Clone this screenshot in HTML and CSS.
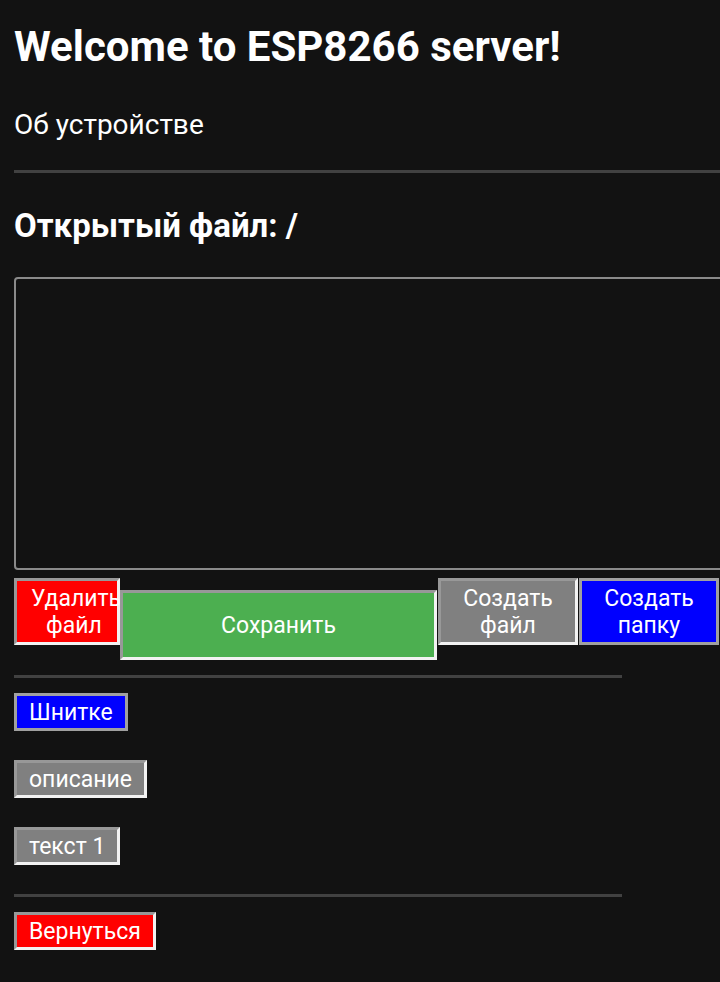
FILE: index.html
```html
<!DOCTYPE html>
<html lang="ru">
<head>
<meta charset="utf-8">
<title>ESP8266</title>
<link rel="stylesheet" href="styles.css">
</head>
<body>
<div class="page">
  <h1 class="title">Welcome to ESP8266 server!</h1>
  <p class="about">Об устройстве</p>
  <hr class="sep sep-wide">
  <h2 class="file-title">Открытый файл: /</h2>
  <textarea class="editor"></textarea>
  <div class="actions">
    <button class="btn btn-red btn-del">Удалить<br>файл</button>
    <button class="btn btn-green btn-save">Сохранить</button>
    <button class="btn btn-gray btn-new">Создать<br>файл</button>
    <button class="btn btn-blue btn-new">Создать<br>папку</button>
  </div>
  <hr class="sep sep-short sep-after-actions">
  <ul class="files">
    <li><button class="btn btn-blue btn-item">Шнитке</button></li>
    <li><button class="btn btn-gray btn-item">описание</button></li>
    <li><button class="btn btn-gray btn-item">текст 1</button></li>
  </ul>
  <hr class="sep sep-short">
  <div class="back">
    <button class="btn btn-red btn-item">Вернуться</button>
  </div>
</div>
</body>
</html>
```

FILE: styles.css
```css
html, body {
  margin: 0;
  padding: 0;
  background: #121212;
  color: #ffffff;
  font-family: Roboto, "Noto Sans", sans-serif;
  overflow: hidden;
}

.page {
  padding: 0 0 0 14px;
}

.title {
  margin: 0;
  padding-top: 22px;
  font-size: 42px;
  line-height: 50px;
  font-weight: 700;
}

.about {
  margin: 0;
  padding-top: 36px;
  font-size: 28px;
  line-height: 34px;
}

.sep {
  border: 0;
  height: 3px;
  background: #414141;
  margin: 0;
}

.sep-wide {
  margin-top: 28px;
}

.file-title {
  margin: 0;
  padding-top: 33px;
  font-size: 33px;
  line-height: 40px;
  font-weight: 700;
}

.editor {
  display: block;
  box-sizing: border-box;
  margin-top: 31px;
  width: 720px;
  height: 293px;
  background: #121212;
  border: 2px solid #8a8a8a;
  border-radius: 4px;
  resize: none;
}

.actions {
  display: flex;
  align-items: flex-start;
  margin-top: 8px;
}

.btn {
  box-sizing: border-box;
  font-family: Roboto, "Noto Sans", sans-serif;
  font-size: 23px;
  line-height: 27px;
  color: #ffffff;
  border-width: 3px;
  border-style: solid;
  border-color: #989898 #f2f2f2 #f2f2f2 #989898;
  padding: 3px 12px;
  margin: 0;
  white-space: nowrap;
}

.btn-red { background: #ff0000; }
.btn-green { background: #4caf50; }
.btn-gray { background: #808080; }
.btn-blue {
  background: #0000ff;
  border-color: #a0a0a0;
}

.btn-del {
  width: 106px;
  height: 67px;
  padding: 3px 0 3px 14px;
  text-align: center;
  overflow: visible;
}

.btn-save {
  width: 317px;
  height: 70px;
  margin-top: 12px;
  position: relative;
}

.btn-new {
  width: 140px;
  height: 67px;
  margin-left: 1px;
}

.sep-short {
  width: 608px;
}

.sep-after-actions {
  margin-top: 15px;
}

.files {
  list-style: none;
  margin: 0;
  padding: 15px 0 0;
}

.files li {
  height: 67px;
}

.btn-item {
  height: 38px;
  padding: 0 12px;
}

.back {
  padding-top: 15px;
}
```
